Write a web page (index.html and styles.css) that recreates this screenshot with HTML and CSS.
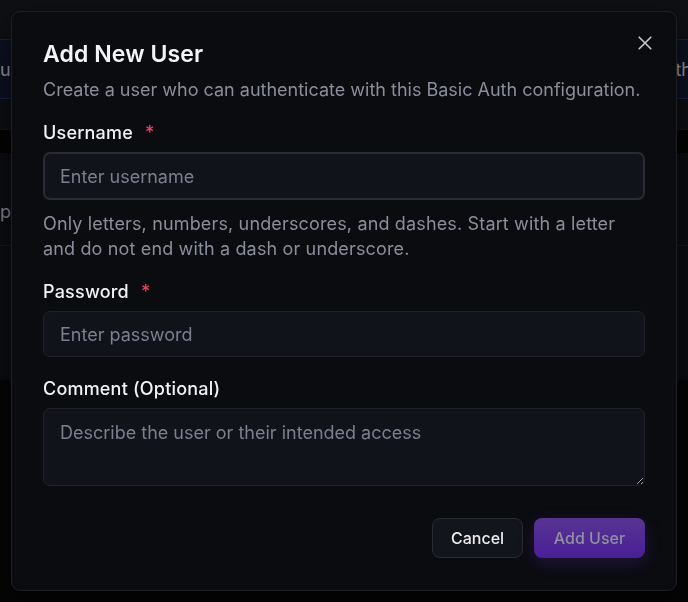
FILE: index.html
```html
<!DOCTYPE html>
<html lang="en">
<head>
<meta charset="utf-8">
<title>Add New User</title>
<link rel="stylesheet" href="styles.css">
</head>
<body>
<div class="page">
  <div class="page-header"></div>
  <div class="page-banner"><span class="banner-left">u</span><span class="banner-right">th</span></div>
  <div class="page-gap"></div>
  <div class="page-band"></div>
  <div class="page-section"><span class="section-text">p</span></div>
  <div class="page-section2"></div>
  <div class="page-rest"></div>
</div>

<div class="overlay">
  <div class="modal" role="dialog" aria-labelledby="dlg-title">
    <button class="close" type="button" aria-label="Close">
      <svg width="14" height="14" viewBox="0 0 14 14" fill="none" stroke="currentColor" stroke-width="1.6" stroke-linecap="round"><path d="M1.2 1.2 L12.8 12.8 M12.8 1.2 L1.2 12.8"/></svg>
    </button>
    <h2 id="dlg-title" class="title">Add New User</h2>
    <p class="subtitle">Create a user who can authenticate with this Basic Auth configuration.</p>

    <div class="field field-first">
      <label class="label" for="u">Username <span class="req">*</span></label>
      <input id="u" class="input input-focus" type="text" placeholder="Enter username">
    </div>
    <p class="help">Only letters, numbers, underscores, and dashes. Start with a letter and do not end with a dash or underscore.</p>

    <div class="field">
      <label class="label" for="p">Password <span class="req">*</span></label>
      <input id="p" class="input" type="password" placeholder="Enter password">
    </div>

    <div class="field field-comment">
      <label class="label" for="c">Comment (Optional)</label>
      <textarea id="c" class="textarea" placeholder="Describe the user or their intended access"></textarea>
    </div>

    <div class="actions">
      <button class="btn btn-cancel" type="button">Cancel</button>
      <button class="btn btn-primary" type="button">Add User</button>
    </div>
  </div>
</div>
</body>
</html>
```

FILE: styles.css
```css
* { box-sizing: border-box; }
html, body { margin: 0; padding: 0; }
body {
  width: 688px;
  height: 602px;
  overflow: hidden;
  background: #050506;
  font-family: Inter, "Noto Sans", sans-serif;
}

/* page behind the dialog */
.page { display: flex; flex-direction: column; }
.page-header { height: 39px; background: #0f1014; }
.page-banner {
  height: 60px;
  background: #0c1120;
  border-top: 1px solid #17213d;
  border-bottom: 1px solid #17213d;
  display: flex;
  justify-content: space-between;
  align-items: center;
  color: #8e94a3;
  font-size: 18px;
}
.banner-right { margin-right: -4px; }
.page-gap { height: 31px; background: #0d0e12; border-bottom: 1px solid #15161b; }
.page-band { height: 23px; background: #030304; }
.page-section {
  height: 93px;
  background: #0b0c10;
  border-bottom: 1px solid #17181d;
  color: #7d8190;
  font-size: 18px;
  display: flex;
  align-items: center;
  padding-top: 24px;
}
.page-section2 { height: 134px; background: #0b0c10; }
.page-rest { flex: 1; background: #050506; }

/* overlay & dialog */
.overlay {
  position: fixed;
  inset: 0;
  padding: 11px;
}
.modal {
  position: relative;
  width: 666px;
  background: #0b0c10;
  border: 1px solid #1e1f26;
  border-radius: 9px;
  padding: 27px 31px 32px;
  display: flex;
  flex-direction: column;
  box-shadow: 0 10px 30px rgba(0,0,0,0.5);
}
.close {
  position: absolute;
  top: 24px;
  right: 24px;
  width: 14px;
  height: 14px;
  padding: 0;
  border: 0;
  background: none;
  color: #c9cad0;
  display: flex;
}
.title {
  margin: 0;
  font-size: 23px;
  line-height: 30px;
  font-weight: 600;
  color: #f4f4f6;
  letter-spacing: 0.1px;
}
.subtitle {
  margin: 9px 0 0;
  font-size: 18px;
  line-height: 24px;
  color: #8b8e9b;
}
.field { display: flex; flex-direction: column; gap: 7px; margin-top: 19px; }
.field-comment { margin-top: 20px; }
.label {
  font-size: 18px;
  line-height: 24px;
  font-weight: 500;
  color: #f2f2f4;
  letter-spacing: 0.2px;
}
.req { color: #f0435d; margin-left: 7px; }
.input, .textarea {
  width: 100%;
  background: #11131a;
  border: 1px solid #20222a;
  border-radius: 7px;
  color: #e6e6ea;
  font-family: Inter, "Noto Sans", sans-serif;
  font-size: 18px;
  padding: 0 16px;
  outline: none;
}
.input { height: 46px; }
.input-focus { height: 48px; border: 2px solid #2a2c35; padding: 0 15px; }
.input::placeholder, .textarea::placeholder { color: #7c7f8e; }
.textarea {
  height: 78px;
  padding: 12px 16px;
  line-height: 24px;
  resize: vertical;
  display: block;
}
.help {
  margin: 11px 0 0;
  font-size: 18px;
  line-height: 25px;
  color: #8b8e9b;
  letter-spacing: 0.15px;
  padding-right: 24px;
}
.actions {
  margin-top: 32px;
  display: flex;
  justify-content: flex-end;
  gap: 11px;
}
.btn {
  height: 40px;
  border-radius: 8px;
  font-family: Inter, "Noto Sans", sans-serif;
  font-size: 16px;
  font-weight: 500;
  padding: 0 18px;
}
.btn-cancel {
  width: 91px;
  background: #13151c;
  border: 1px solid #2a2c34;
  color: #ececef;
}
.btn-primary {
  width: 111px;
  border: 0;
  background: linear-gradient(#573592, #4a1e97);
  color: #9290a0;
  box-shadow: 0 5px 16px rgba(110, 50, 220, 0.22);
}
```
